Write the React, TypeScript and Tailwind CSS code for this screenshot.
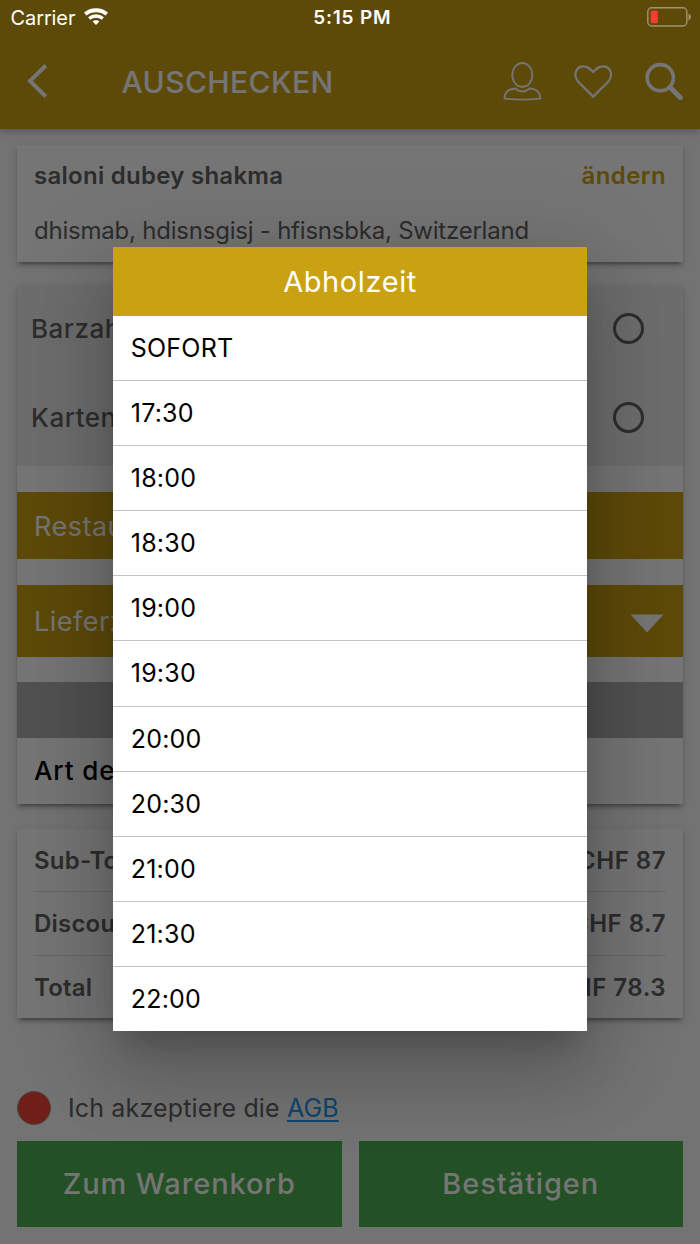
const TIMES = [
  "SOFORT",
  "17:30",
  "18:00",
  "18:30",
  "19:00",
  "19:30",
  "20:00",
  "20:30",
  "21:00",
  "21:30",
  "22:00",
];

const PAYMENTS = ["Barzahlung", "Kartenzahlung"];

const TOTALS = [
  { label: "Sub-Total", value: "CHF 87" },
  { label: "Discount", value: "CHF 8.7" },
  { label: "Total", value: "CHF 78.3" },
];

const cardShadow =
  "shadow-[0_6px_2px_-4px_rgba(0,0,0,0.2),0_4px_4px_rgba(0,0,0,0.14),0_2px_9px_rgba(0,0,0,0.12)]";

function StatusBar() {
  return (
    <div className="absolute inset-x-0 top-0 z-20 grid h-[36px] grid-cols-3 items-center pl-[10.5px] pr-[8px] text-white">
      <div className="flex items-center gap-[9px]">
        <span className="text-[20px] leading-[36px] tracking-[-0.1px]">Carrier</span>
        <svg width="24" height="17" viewBox="0 0 24 17" fill="none" stroke="currentColor" className="-mt-[3px]">
          <path d="M1.2 6.2C7.2 0.9 16.8 0.9 22.8 6.2" strokeWidth="3.8" />
          <path d="M5.2 10.6C9 7.2 15 7.2 18.8 10.6" strokeWidth="3.4" />
          <path d="M12 17L8.6 13.6C10.4 11.9 13.6 11.9 15.4 13.6Z" fill="currentColor" stroke="none" />
        </svg>
      </div>
      <span className="pl-[2px] text-center text-[19px] font-semibold leading-[36px] tracking-[0.8px]">5:15 PM</span>
      <svg width="45" height="20" viewBox="0 0 45 20" className="-mt-[2px] justify-self-end">
        <rect x="0.8" y="0.8" width="39" height="18.2" rx="4" fill="none" stroke="#a1946d" strokeWidth="1.4" />
        <rect x="3.8" y="3.8" width="7" height="12.4" rx="1" fill="#ff3b30" />
        <path d="M41.5 6.6C44.8 8 44.8 12 41.5 13.4Z" fill="#a1946d" />
      </svg>
    </div>
  );
}

function Header() {
  return (
    <header className="relative flex h-[128.5px] items-center bg-[#cba114] pl-[26px] pr-[16px] pt-[34px] text-white shadow-[0_3px_6px_rgba(0,0,0,0.22)]">
      <svg width="22" height="34" viewBox="0 0 22 34" fill="none" stroke="currentColor" strokeWidth="4">
        <path d="M19.8 1.5L4 17L19.8 32.5" />
      </svg>
      <h1 className="ml-[73.5px] flex-1 pt-[1px] text-[30px] font-medium leading-[40px] tracking-[0.4px]">AUSCHECKEN</h1>
      <svg width="40" height="40" viewBox="0 0 40 40" fill="none" stroke="currentColor" strokeWidth="1.8">
        <ellipse cx="20.3" cy="14" rx="10" ry="12" />
        <path d="M13.8 27.5C6.5 27.5 2.5 31.5 2.5 37.6C14 38.8 27 38.8 38.3 37.6C38.3 31.5 34.2 27.5 27 27.5C24 31.5 16.8 31.5 13.8 27.5Z" />
      </svg>
      <svg width="40" height="36" viewBox="0 0 40 36" fill="none" stroke="currentColor" strokeWidth="2.2" className="ml-[31px]">
        <path d="M20.2 33.6L5 18.6C-0.2 12 3 3.4 10.4 3.4C14.8 3.4 16.8 5.6 20.2 9C23.6 5.6 25.6 3.4 30 3.4C37.4 3.4 40.6 12 35.4 18.6Z" />
      </svg>
      <svg width="40" height="40" viewBox="0 0 40 40" fill="none" stroke="currentColor" className="ml-[31px]">
        <circle cx="16.3" cy="16.7" r="13.1" strokeWidth="3.6" />
        <path d="M26.5 26.8L36.3 36.5" strokeWidth="5" strokeLinecap="round" />
      </svg>
    </header>
  );
}

function TimeDialog() {
  return (
    <div className="w-[473.4px] bg-white text-black shadow-[0_20px_28px_-13px_rgba(0,0,0,0.2),0_45px_71px_6px_rgba(0,0,0,0.14),0_17px_86px_15px_rgba(0,0,0,0.12)]">
      <h2 className="h-[69px] bg-[#cba114] text-center text-[29px] leading-[70px] tracking-[0.6px] text-white">
        Abholzeit
      </h2>
      <ul>
        {TIMES.map((time) => (
          <li
            key={time}
            className="h-[65.1px] border-b border-[#c4c4c4] pl-[17.5px] text-[25px] leading-[64.5px] tracking-[0.2px] last:h-[64px] last:border-b-0"
          >
            {time}
          </li>
        ))}
      </ul>
    </div>
  );
}

export default function App() {
  return (
    <div className="relative h-[1244px] w-[700px] overflow-hidden bg-[#fafafa] font-['Inter',sans-serif] text-[#626262]">
      <Header />

      <main className="px-[17px] pt-[16.5px]">
        <section className={`h-[117px] bg-white px-[17px] ${cardShadow}`}>
          <div className="flex justify-between pt-[11px] text-[24px] font-semibold leading-[40px] tracking-[0.27px]">
            <span>saloni dubey shakma</span>
            <button className="font-semibold tracking-[0.4px] text-[#cba114]">ändern</button>
          </div>
          <p className="mt-[15px] text-[24px] leading-[40px] tracking-[-0.22px]">
            dhismab, hdisnsgisj - hfisnsbka, Switzerland
          </p>
        </section>

        <section className={`mt-[24px] h-[518px] bg-white ${cardShadow}`}>
          <div className="h-[180px] bg-[#eeeeee] pl-[14px] pr-[39px] text-[26px] font-medium tracking-[0.5px]">
            {PAYMENTS.map((name) => (
              <div key={name} className="flex h-[89.5px] items-center justify-between pb-[5px]">
                <span>{name}</span>
                <span className="size-[31px] rounded-full border-[3px] border-[#626262]" />
              </div>
            ))}
          </div>
          <div className="mt-[26px] h-[67px] bg-[#cba114] pl-[17px] text-[27px] leading-[69px] tracking-[0.5px] text-white">
            Restaurant
          </div>
          <div className="mt-[26px] flex h-[72px] items-center justify-between bg-[#cba114] pl-[17px] pr-[19px] text-[27px] tracking-[0.5px] text-white">
            <span className="pt-[2px]">Lieferzeit</span>
            <svg width="34" height="19" viewBox="0 0 34 19" fill="currentColor" className="mt-[4px]">
              <path d="M0.5 0.5H33.5L17 18.5Z" />
            </svg>
          </div>
          <div className="mt-[25px] h-[56px] bg-[#b0b0b0]" />
          <p className="pl-[17px] text-[26px] font-medium leading-[66px] tracking-[0.9px] text-black">Art der Lieferung</p>
        </section>

        <section className={`mt-[25px] h-[189px] bg-white px-[17px] ${cardShadow}`}>
          {TOTALS.map((row) => (
            <div
              key={row.label}
              className="flex h-[63.3px] justify-between border-b border-[#dedede] text-[24px] font-semibold leading-[63px] tracking-[0.2px] last:border-b-0"
            >
              <span>{row.label}</span>
              <span className="tracking-[0.5px]">{row.value}</span>
            </div>
          ))}
        </section>

        <div className="mt-[72px] flex h-[36px] items-center text-[25px] tracking-[0.14px]">
          <span className="size-[34px] rounded-full border border-[#999999] bg-[#f44336]" />
          <span className="ml-[17px] pt-[2px]">
            Ich akzeptiere die{" "}
            <a className="text-[#2196f3] underline decoration-2 underline-offset-[3px]">AGB</a>
          </span>
        </div>

        <div className="mt-[15px] grid grid-cols-2 gap-[17px] text-white">
          <button className="h-[86px] bg-[#4caf50] text-[29px] font-medium tracking-[0.9px]">Zum Warenkorb</button>
          <button className="h-[86px] bg-[#4caf50] text-[29px] font-medium tracking-[0.9px]">Bestätigen</button>
        </div>
      </main>

      <div className="absolute inset-0 z-10 flex items-start justify-center bg-black/54 pt-[247px]">
        <TimeDialog />
      </div>
      <StatusBar />
    </div>
  );
}
